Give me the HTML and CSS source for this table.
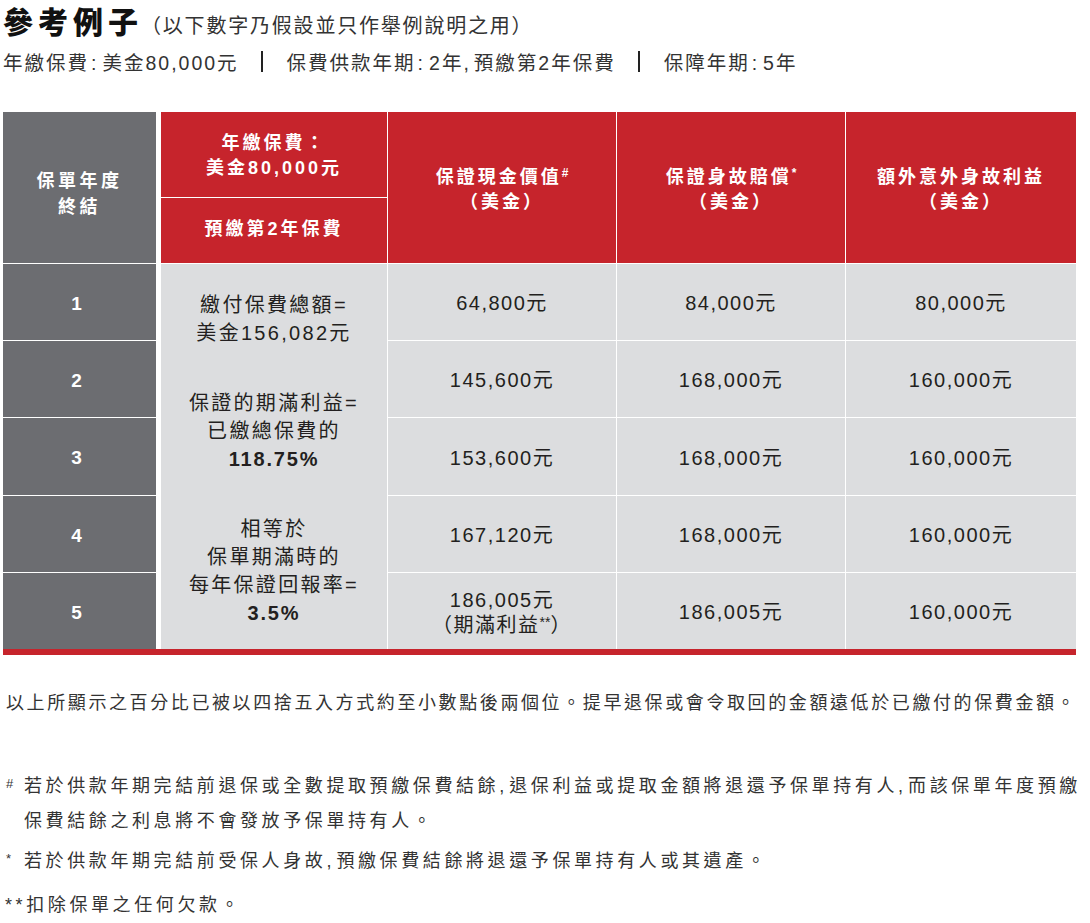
FILE: index.html
```html
<!DOCTYPE html>
<html lang="zh-Hant">
<head>
<meta charset="utf-8">
<title>參考例子</title>
<link rel="stylesheet" href="styles.css">
</head>
<body>
<div class="page">
  <h1 class="title">參考例子<span class="subtitle">（以下數字乃假設並只作舉例說明之用）</span></h1>
  <div class="summary">
    <span>年繳保費<span class="colon">:</span>美金80,000元</span>
    <span class="bar"></span>
    <span>保費供款年期<span class="colon">:</span>2年<span class="comma">,</span>預繳第2年保費</span>
    <span class="bar"></span>
    <span>保障年期<span class="colon">:</span>5年</span>
  </div>

  <div class="table">
    <div class="h-grey"><span>保單年度<br>終結</span></div>
    <div class="h-red h-top"><span>年繳保費：<br>美金80,000元</span></div>
    <div class="h-red h-span c3"><span>保證現金價值<sup>#</sup><br>（美金）</span></div>
    <div class="h-red h-span c4"><span>保證身故賠償<sup>*</sup><br>（美金）</span></div>
    <div class="h-red h-span c5"><span>額外意外身故利益<br>（美金）</span></div>
    <div class="h-red h-bottom"><span>預繳第2年保費</span></div>

    <div class="yr r3">1</div>
    <div class="yr r4">2</div>
    <div class="yr r5">3</div>
    <div class="yr r6">4</div>
    <div class="yr r7">5</div>

    <div class="merged">
      <p>繳付保費總額=<br>美金156,082元</p>
      <p>保證的期滿利益=<br>已繳總保費的<br><b>118.75%</b></p>
      <p>相等於<br>保單期滿時的<br>每年保證回報率=<br><b>3.5%</b></p>
    </div>

    <div class="cell r3 c3">64,800元</div>
    <div class="cell r3 c4">84,000元</div>
    <div class="cell r3 c5">80,000元</div>
    <div class="cell r4 c3">145,600元</div>
    <div class="cell r4 c4">168,000元</div>
    <div class="cell r4 c5">160,000元</div>
    <div class="cell r5 c3">153,600元</div>
    <div class="cell r5 c4">168,000元</div>
    <div class="cell r5 c5">160,000元</div>
    <div class="cell r6 c3">167,120元</div>
    <div class="cell r6 c4">168,000元</div>
    <div class="cell r6 c5">160,000元</div>
    <div class="cell r7 c3"><span>186,005元<br>（期滿利益<sup class="ast">**</sup>）</span></div>
    <div class="cell r7 c4">186,005元</div>
    <div class="cell r7 c5">160,000元</div>
  </div>
  <div class="redbar"></div>

  <p class="note">以上所顯示之百分比已被以四捨五入方式約至小數點後兩個位。提早退保或會令取回的金額遠低於已繳付的保費金額。</p>

  <div class="fn fn1"><span class="mark">#</span><span class="fn-text">若於供款年期完結前退保或全數提取預繳保費結餘<span class="comma">,</span>退保利益或提取金額將退還予保單持有人<span class="comma">,</span>而該保單年度預繳<br>保費結餘之利息將不會發放予保單持有人。</span></div>
  <div class="fn fn2"><span class="mark">*</span><span class="fn-text">若於供款年期完結前受保人身故<span class="comma">,</span>預繳保費結餘將退還予保單持有人或其遺產。</span></div>
  <div class="fn fn3"><span class="fn-text">**扣除保單之任何欠款。</span></div>
</div>
</body>
</html>
```

FILE: styles.css
```css
html, body {
  margin: 0;
  padding: 0;
  background: #ffffff;
}

body {
  font-family: "Liberation Sans", "Noto Sans CJK TC", sans-serif;
  color: #231f20;
}

.page {
  width: 1073px;
  padding: 0 3px;
}

.title {
  margin: 0;
  padding-top: 4px;
  height: 40px;
  line-height: 38px;
  font-size: 30px;
  font-weight: 900;
  letter-spacing: 5px;
  color: #111;
  display: flex;
  align-items: baseline;
}

.subtitle {
  font-size: 20px;
  font-weight: 400;
  letter-spacing: 1.8px;
  color: #333;
  margin-left: -2px;
}

.summary {
  margin-top: 4px;
  height: 26px;
  display: flex;
  align-items: center;
  font-size: 19.5px;
  letter-spacing: 2px;
  color: #333;
}

.colon {
  margin: 0 4px 0 2px;
}

.comma {
  letter-spacing: 5px;
}

.bar {
  display: inline-block;
  width: 2px;
  height: 21px;
  background: #222;
  margin: 0 24px 0 22px;
}

/* table */
.table {
  margin-top: 38px;
  display: grid;
  grid-template-columns: 157px 226px 228px 228px 230px;
  grid-template-rows: 85px 65px 76px 76px 77px 76px 76px;
  column-gap: 1px;
  row-gap: 1px;
}

.h-grey, .yr {
  background: #6c6d71;
  color: #fff;
  margin-right: 4px;
  display: flex;
  align-items: center;
  justify-content: center;
  text-align: center;
  font-weight: 700;
}

.h-grey {
  grid-column: 1;
  grid-row: 1 / 3;
  font-size: 18px;
  letter-spacing: 3.5px;
  line-height: 26px;
  padding-top: 12px;
}

.h-red {
  background: #c6242c;
  color: #fff;
  display: flex;
  align-items: center;
  justify-content: center;
  text-align: center;
  font-weight: 700;
  font-size: 18px;
  letter-spacing: 3px;
  line-height: 25px;
}

.h-top {
  grid-column: 2;
  grid-row: 1;
  padding-top: 2px;
}

.h-bottom {
  grid-column: 2;
  grid-row: 2;
  padding-bottom: 2px;
}

.h-span {
  grid-row: 1 / 3;
  padding-top: 4px;
}

.h-red sup {
  font-size: 12px;
  line-height: 0;
  letter-spacing: 0;
  vertical-align: 6px;
}

.c3 { grid-column: 3; }
.c4 { grid-column: 4; }
.c5 { grid-column: 5; }
.r3 { grid-row: 3; }
.r4 { grid-row: 4; }
.r5 { grid-row: 5; }
.r6 { grid-row: 6; }
.r7 { grid-row: 7; }

.yr {
  grid-column: 1;
  font-size: 19px;
  padding-right: 6px;
  padding-top: 3px;
}

.merged {
  grid-column: 2;
  grid-row: 3 / 8;
  background: #dcdddf;
  text-align: center;
  font-size: 20px;
  letter-spacing: 2.3px;
  line-height: 28px;
  padding-top: 27px;
  box-sizing: border-box;
}

.merged p {
  margin: 0 0 42px;
}

.merged b {
  font-weight: 700;
  letter-spacing: 1.8px;
}

.cell {
  background: #dcdddf;
  display: flex;
  align-items: center;
  justify-content: center;
  text-align: center;
  font-size: 20px;
  letter-spacing: 1.5px;
  line-height: 25px;
  padding-top: 3px;
}

.ast {
  font-size: 14px;
  line-height: 0;
  letter-spacing: 0;
  vertical-align: 5px;
}

.redbar {
  height: 6px;
  background: #c6242c;
}

/* notes */
.note {
  margin: 34px 0 0;
  padding-left: 3px;
  font-size: 18px;
  line-height: 28px;
  letter-spacing: 2.6px;
  color: #333;
  white-space: nowrap;
}

.fn {
  display: flex;
  font-size: 18px;
  line-height: 35px;
  letter-spacing: 3.6px;
  color: #333;
  white-space: nowrap;
}

.fn1 {
  margin-top: 52px;
}

.fn2 {
  margin-top: 5px;
}

.fn3 {
  margin-top: 9px;
  padding-left: 2px;
}

.mark {
  flex: 0 0 21px;
  padding-left: 3px;
  box-sizing: border-box;
  font-size: 13px;
  letter-spacing: 0;
  line-height: 30px;
}

.fn-text {
  flex: 1;
}
```
